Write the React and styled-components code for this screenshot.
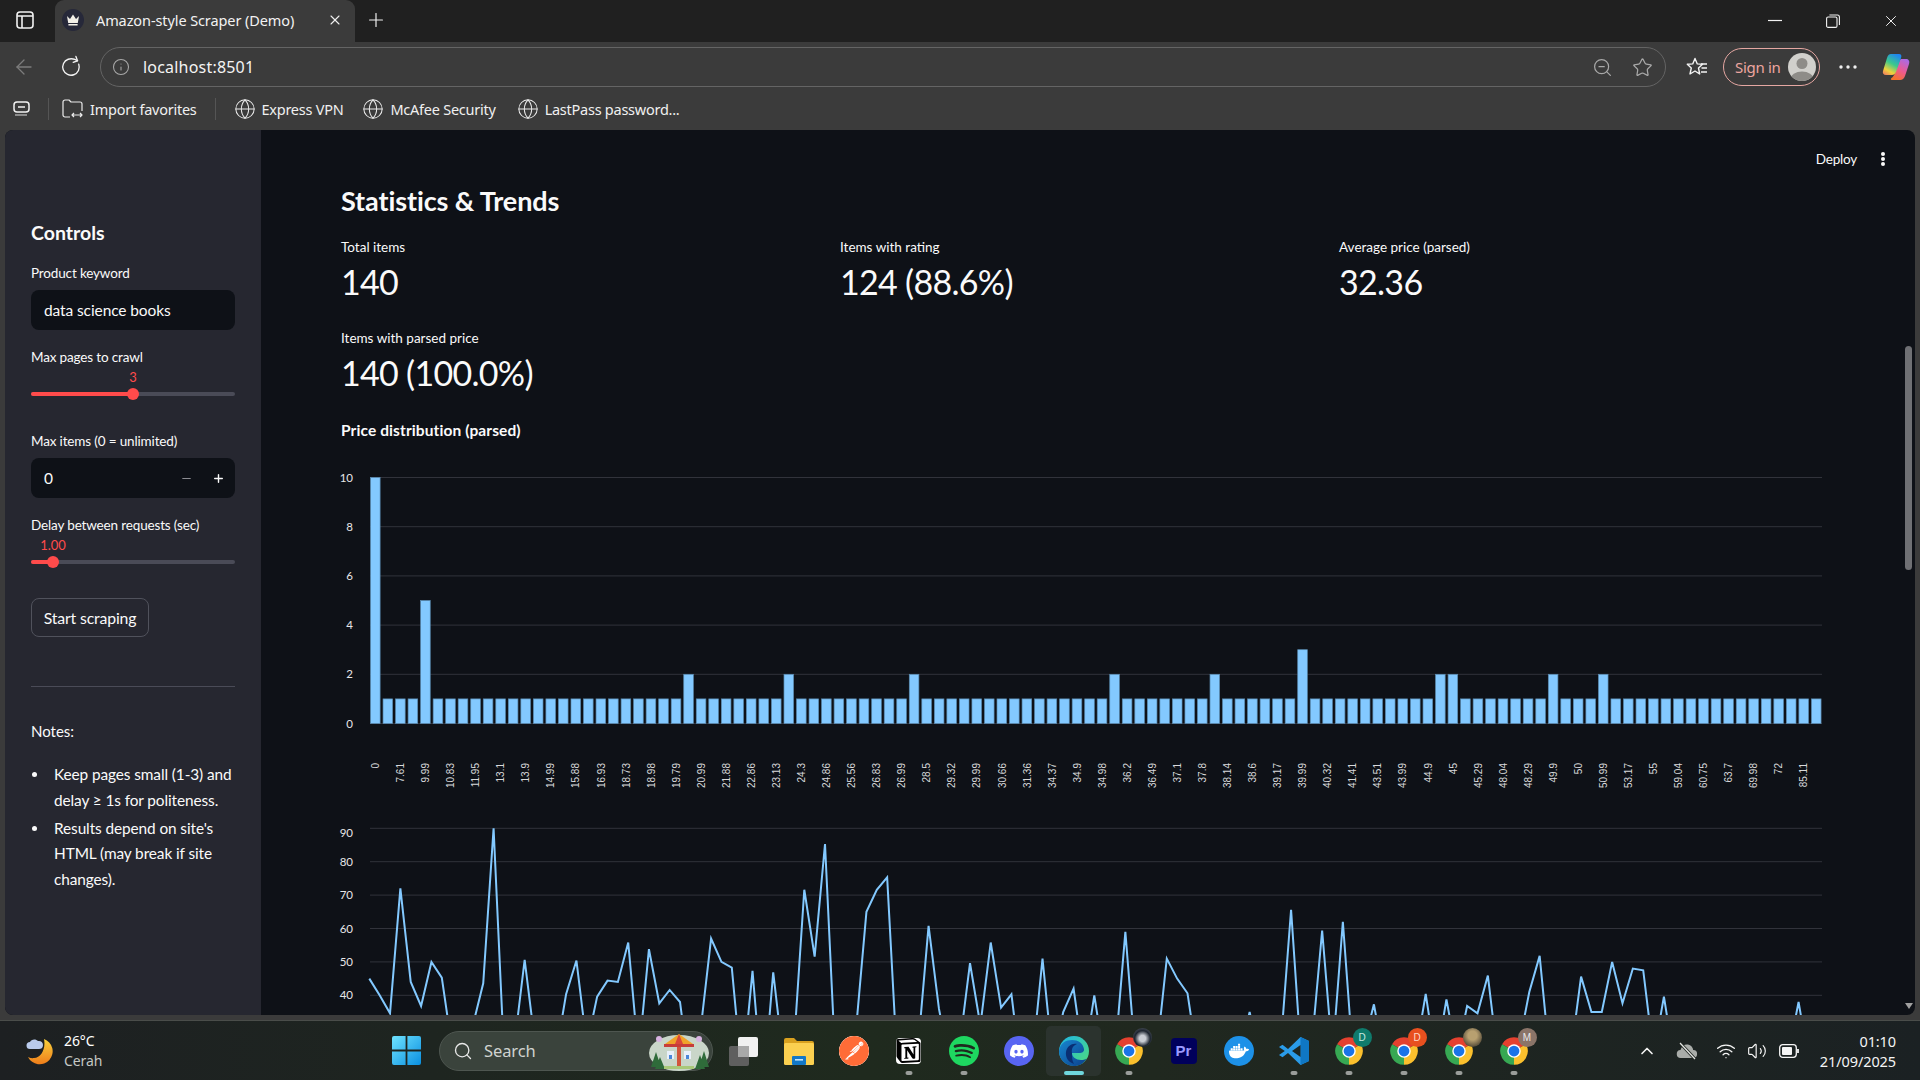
import React from "react"
import styled, { createGlobalStyle } from "styled-components"
import {
  ArrowLeft,
  RotateCw,
  Info,
  ZoomOut,
  Star,
  Globe,
  X,
  Plus,
  Minus,
  Search,
  Wifi,
  Volume2,
  ChevronUp,
} from "lucide-react"
import { SiPostman, SiNotion, SiSpotify, SiDiscord, SiDocker } from "react-icons/si"

const APP_FONT = `Lato, "Noto Sans", sans-serif`
const CHROME_FONT = `"Noto Sans", "Open Sans", sans-serif`

const GlobalStyle = createGlobalStyle`
  html, body { margin: 0; height: 100%; background: #3b3b3b; overflow: hidden; }
  * { box-sizing: border-box; }
`

const Screen = styled.div`
  width: 1920px;
  height: 1080px;
  display: flex;
  flex-direction: column;
  font-family: ${CHROME_FONT};
  color: #fff;
`

/* ---------- browser chrome ---------- */
const TitleBar = styled.div`
  height: 42px;
  background: #202020;
  display: flex;
  align-items: flex-end;
`
const SideToggle = styled.div`
  width: 55px;
  height: 42px;
  padding: 0 5px 2px 0;
  display: flex;
  align-items: center;
  justify-content: center;
`
const Tab = styled.div`
  width: 300px;
  height: 42px;
  background: #3b3b3b;
  border-radius: 9px 9px 0 0;
  display: flex;
  align-items: center;
  padding: 0 12px 2px 7px;
`
const Favicon = styled.div`
  width: 22px;
  height: 22px;
  border-radius: 50%;
  background: #262839;
  display: flex;
  align-items: center;
  justify-content: center;
  margin-right: 12px;
`
const TabTitle = styled.span`
  flex: 1;
  font-size: 14.5px;
  letter-spacing: -0.1px;
  color: #f2f2f2;
`
const NewTab = styled.div`
  width: 42px;
  height: 42px;
  padding-bottom: 3px;
  display: flex;
  align-items: center;
  justify-content: center;
`
const WindowButtons = styled.div`
  margin-left: auto;
  display: flex;
`
const WindowButton = styled.div`
  width: 58px;
  height: 42px;
  display: flex;
  align-items: center;
  justify-content: center;
`
const Toolbar = styled.div`
  height: 50px;
  background: #3b3b3b;
  display: flex;
  align-items: center;
`
const NavButton = styled.div`
  width: ${(p) => p.$w || 45}px;
  display: flex;
  justify-content: center;
  color: ${(p) => p.$color || "#f0f0f0"};
`
const AddressBar = styled.div`
  width: 1566px;
  height: 40px;
  margin-left: 7px;
  border: 1px solid #646464;
  border-radius: 20px;
  display: flex;
  align-items: center;
  padding: 0 12px 0 11px;
  color: #a9a9a9;
`
const Url = styled.span`
  flex: 1;
  margin-left: 13px;
  font-size: 16px;
  letter-spacing: 0.2px;
  color: #f4f4f4;
`
const AddressAction = styled.div`
  margin-left: 19px;
  display: flex;
`
const SignIn = styled.div`
  width: 97px;
  height: 38px;
  margin: 0 3px 0 -5px;
  border: 1.5px solid #e5a7a2;
  border-radius: 19px;
  display: flex;
  align-items: center;
  justify-content: space-between;
  padding: 0 3px 0 11px;
  font-size: 15px;
  letter-spacing: -0.3px;
  color: #eda6a0;
`
const Bookmarks = styled.div`
  height: 38px;
  padding-bottom: 5px;
  background: #3b3b3b;
  display: flex;
  align-items: center;
  font-size: 14.5px;
  letter-spacing: -0.25px;
  color: #f0f0f0;
`
const BookmarkLeading = styled.div`
  width: 48px;
  display: flex;
  justify-content: center;
  padding-right: 4px;
`
const BookmarkDivider = styled.div`
  width: 1px;
  height: 22px;
  background: #555;
`
const Bookmark = styled.div`
  display: flex;
  align-items: center;
  gap: 6px;
  margin-left: ${(p) => p.$ml}px;
  color: #ececec;
`
const BookmarkLabel = styled.span`
  color: #f0f0f0;
`

/* ---------- streamlit window ---------- */
const AppWindow = styled.div`
  position: relative;
  height: 885px;
  margin: 0 5px;
  background: #0e1117;
  border-radius: 8px 8px 8px 8px;
  display: flex;
  overflow: hidden;
  font-family: ${APP_FONT};
  color: #fafafa;
`
const Sidebar = styled.aside`
  width: 256px;
  flex-shrink: 0;
  background: #262730;
  padding: 88px 26px 0;
`
const SidebarTitle = styled.h3`
  margin: 0 0 15px;
  font-size: 19.5px;
  line-height: 30px;
  font-weight: 700;
  letter-spacing: 0;
`
const Field = styled.div`
  padding-bottom: 17px;
`
const FieldLabel = styled.div`
  font-size: 13.5px;
  line-height: 20px;
  letter-spacing: -0.15px;
  margin-bottom: ${(p) => p.$mb || 0}px;
`
const InputBox = styled.div`
  height: 40px;
  background: #0e1117;
  border-radius: 8px;
  display: flex;
  align-items: center;
  padding: 0 13px;
  font-size: 15.5px;
  letter-spacing: -0.1px;
`
const Stepper = styled.div`
  margin-left: auto;
  display: flex;
  align-items: center;
  gap: 19px;
  margin-right: -3px;
`
const SliderTrack = styled.div`
  position: relative;
  height: 4px;
  margin: 25px 0 18px;
  border-radius: 2px;
  background: #4a4b57;
`
const SliderFill = styled.div`
  height: 100%;
  border-radius: 2px;
  background: #ff4b4b;
  width: ${(p) => p.$pos}px;
`
const SliderThumb = styled.div`
  position: absolute;
  top: -4px;
  left: ${(p) => p.$pos - 6}px;
  width: 12px;
  height: 12px;
  border-radius: 50%;
  background: #ff4b4b;
`
const SliderValue = styled.div`
  position: absolute;
  top: -23px;
  left: ${(p) => p.$pos}px;
  transform: translateX(-50%);
  font-size: 13px;
  line-height: 16px;
  color: #ff4b4b;
`
const StartButton = styled.div`
  width: 118px;
  height: 39px;
  margin-top: -1px;
  border: 1px solid #50525c;
  border-radius: 8px;
  display: flex;
  align-items: center;
  justify-content: center;
  font-size: 15.8px;
  letter-spacing: -0.15px;
`
const Rule = styled.hr`
  margin: 49px 0 32px;
  border: 0;
  border-top: 1px solid #4a4b57;
`
const NotesTitle = styled.div`
  font-size: 15px;
  line-height: 25.5px;
`
const NotesList = styled.ul`
  margin: 17.5px 0 0;
  padding: 0 0 0 23px;
  list-style: none;
`
const NotesItem = styled.li`
  position: relative;
  font-size: 15.4px;
  line-height: 25.5px;
  margin-bottom: 2.5px;
  letter-spacing: -0.1px;
  white-space: nowrap;
  &::before {
    content: "";
    position: absolute;
    left: -22.5px;
    top: 10px;
    width: 5px;
    height: 5px;
    border-radius: 50%;
    background: #fafafa;
  }
`
const Main = styled.main`
  flex: 1;
  padding: 51px 0 0 80px;
  overflow: hidden;
`
const Heading = styled.h2`
  margin: 0 0 16px;
  font-size: 27px;
  line-height: 40px;
  font-weight: 700;
  letter-spacing: -0.1px;
`
const Metrics = styled.div`
  width: 1497px;
  display: grid;
  grid-template-columns: repeat(3, 1fr);
  row-gap: 21px;
`
const MetricLabel = styled.div`
  font-size: 13.5px;
  line-height: 20px;
  letter-spacing: 0;
`
const MetricValue = styled.div`
  font-size: 34px;
  line-height: 50px;
  letter-spacing: -0.7px;
`
const SectionLabel = styled.div`
  margin-top: 22px;
  font-size: 15.5px;
  line-height: 20px;
  font-weight: 700;
  letter-spacing: 0.1px;
`
const Chart = styled.svg`
  display: block;
  margin-left: -11px;
  margin-top: ${(p) => p.$mt}px;
  overflow: hidden;
`
const AxisNumber = styled.text`
  font-family: ${APP_FONT};
  font-size: 11.5px;
  fill: #e6e6e8;
  text-anchor: end;
`
const AxisCategory = styled.text`
  font-family: "Liberation Sans", sans-serif;
  font-size: 10px;
  fill: #d8d9db;
  text-anchor: end;
`
const TopActions = styled.div`
  position: absolute;
  top: 21px;
  right: 30px;
  display: flex;
  align-items: center;
  gap: 24px;
  font-size: 13.5px;
  letter-spacing: -0.2px;
`
const Kebab = styled.div`
  display: flex;
  flex-direction: column;
  gap: 1px;
  span {
    width: 4px;
    height: 4px;
    border-radius: 50%;
    background: #fafafa;
  }
`
const ScrollThumb = styled.div`
  position: absolute;
  top: 216px;
  right: 3px;
  width: 7px;
  height: 224px;
  border-radius: 4px;
  background: #6f7074;
`
const ScrollArrow = styled.div`
  position: absolute;
  right: 2px;
  bottom: 6px;
  width: 0;
  height: 0;
  border-left: 4.5px solid transparent;
  border-right: 4.5px solid transparent;
  border-top: 6px solid #a0a0a0;
`
const WindowGap = styled.div`
  height: 5px;
  background: #3b3b3b;
`

/* ---------- windows taskbar ---------- */
const Taskbar = styled.div`
  height: 60px;
  border-top: 1px solid #4a4d4a;
  background: linear-gradient(90deg, #1d2022 0%, #1f2a1e 45%, #20281f 60%, #1b2123 100%);
  display: flex;
  align-items: center;
`
const Weather = styled.div`
  width: 392px;
  display: flex;
  align-items: center;
  padding-left: 25px;
  gap: 9px;
`
const WeatherText = styled.div`
  font-size: 14px;
  line-height: 20px;
  letter-spacing: -0.1px;
  span {
    display: block;
    color: #c4c7c4;
  }
`
const SearchBox = styled.div`
  position: relative;
  width: 274px;
  height: 40px;
  margin-left: 18px;
  border-radius: 20px;
  border: 1px solid #4e5650;
  background: #3a433c;
  display: flex;
  align-items: center;
  padding-left: 13px;
  gap: 11px;
  font-size: 16.5px;
  letter-spacing: -0.1px;
  color: #d0d3d0;
`
const SearchArt = styled.svg`
  position: absolute;
  right: 0;
  top: -1px;
`
const TaskIcons = styled.div`
  display: flex;
  margin-left: 3px;
`
const TaskSlot = styled.div`
  position: relative;
  width: 55px;
  height: 50px;
  display: flex;
  align-items: center;
  justify-content: center;
  border-radius: 5px;
  background: ${(p) => (p.$active ? "#2b332e" : "transparent")};
  &::after {
    content: "";
    display: ${(p) => (p.$open || p.$active ? "block" : "none")};
    position: absolute;
    bottom: 1px;
    left: 50%;
    transform: translateX(-50%);
    width: ${(p) => (p.$active ? 20 : 7)}px;
    height: 4px;
    border-radius: 2px;
    background: ${(p) => (p.$active ? "#6fd6dc" : "#9a9d9a")};
  }
`
const CircleIcon = styled.div`
  width: ${(p) => p.$size || 30}px;
  height: ${(p) => p.$size || 30}px;
  border-radius: 50%;
  background: ${(p) => p.$bg};
  display: flex;
  align-items: center;
  justify-content: center;
  color: #fff;
`
const NotionTile = styled.div`
  width: 25px;
  height: 26px;
  border-radius: 4px;
  background: #fff;
  display: flex;
  align-items: center;
  justify-content: center;
  color: #000;
`
const PremiereTile = styled.div`
  width: 26px;
  height: 26px;
  border-radius: 4px;
  background: #00005b;
  color: #9a9aff;
  font-family: "Liberation Sans", sans-serif;
  font-size: 15px;
  font-weight: 700;
  display: flex;
  align-items: center;
  justify-content: center;
`
const ChromeWrap = styled.div`
  position: relative;
  width: 30px;
  height: 30px;
`
const ChromeBadge = styled.div`
  position: absolute;
  top: -8px;
  right: -8px;
  width: 19px;
  height: 19px;
  border-radius: 50%;
  background: ${(p) => p.$bg};
  display: flex;
  align-items: center;
  justify-content: center;
  font-family: "Liberation Sans", sans-serif;
  font-size: 10px;
  color: ${(p) => p.$fg || "#e8e8e8"};
`
const Tray = styled.div`
  margin-left: auto;
  display: flex;
  align-items: center;
  color: #f5f5f5;
`
const TrayIcon = styled.div`
  width: ${(p) => p.$w}px;
  display: flex;
  justify-content: center;
  color: ${(p) => p.$color || "#f5f5f5"};
`
const Clock = styled.div`
  width: 104px;
  margin-left: 7px;
  padding-right: 24px;
  white-space: nowrap;
  font-size: 14.5px;
  line-height: 20px;
  letter-spacing: -0.1px;
`
const ClockLine = styled.div`
  display: flex;
  justify-content: flex-end;
`

/* ---------- drawn icons ---------- */
const PanelIcon = () => (
  <svg width="18" height="18" viewBox="0 0 18 18" fill="none" stroke="#f2f2f2" strokeWidth="1.6">
    <rect x="1" y="1" width="16" height="16" rx="3" />
    <path d="M1 5h16M6 5v12" />
  </svg>
)
const Crown = () => (
  <svg width="14" height="12" viewBox="0 0 14 12" fill="#f1efe8">
    <path d="M1 2l3 3 3-4.5L10 5l3-3-1.2 7H2.2zM2.4 10h9.2v1.6H2.4z" />
  </svg>
)
const MinimizeIcon = () => (
  <svg width="14" height="4" viewBox="0 0 14 4" stroke="#f2f2f2" strokeWidth="1.2">
    <path d="M0 1.5h14" />
  </svg>
)
const RestoreIcon = () => (
  <svg width="14" height="14" viewBox="0 0 14 14" fill="none" stroke="#f2f2f2" strokeWidth="1.1">
    <rect x="0.6" y="3" width="10.4" height="10.4" rx="1.5" />
    <path d="M3.4 1h8a2 2 0 0 1 2 2v8" />
  </svg>
)
const FavoritesIcon = () => (
  <svg width="22" height="20" viewBox="0 0 22 20" fill="none" stroke="#f4f4f4" strokeWidth="1.4" strokeLinejoin="round">
    <path d="M10 1.5l2.3 5.4 5.2.4-4 3.7 1.2 6-4.7-3-5 3 1.3-6-4-3.7 5.4-.4z" transform="translate(-1 0)" />
    <path d="M15 7h6M15.5 11h5.5M15 15h6" />
  </svg>
)
const Avatar = () => (
  <svg width="28" height="28" viewBox="0 0 28 28">
    <defs>
      <clipPath id="avatar-clip">
        <circle cx="14" cy="14" r="14" />
      </clipPath>
    </defs>
    <circle cx="14" cy="14" r="14" fill="#d1d0cc" />
    <g clipPath="url(#avatar-clip)" fill="#8e8c88">
      <circle cx="14" cy="10.5" r="5.5" />
      <ellipse cx="14" cy="26" rx="11.5" ry="7.5" />
    </g>
  </svg>
)
const Copilot = () => (
  <svg width="28" height="28" viewBox="0 0 28 28">
    <defs>
      <linearGradient id="cp-a" x1="0.7" y1="0" x2="0.2" y2="1">
        <stop offset="0" stopColor="#1f86f0" />
        <stop offset="0.45" stopColor="#3cc98c" />
        <stop offset="0.8" stopColor="#f0d23c" />
        <stop offset="1" stopColor="#f08a5a" />
      </linearGradient>
      <linearGradient id="cp-b" x1="0.8" y1="0" x2="0.3" y2="1">
        <stop offset="0" stopColor="#a86be8" />
        <stop offset="0.55" stopColor="#ee5a8e" />
        <stop offset="1" stopColor="#f5722b" />
      </linearGradient>
    </defs>
    <path d="M19 6H24C26.500 6 28 8 27 11L23 23C22 25.500 20.500 27 18 27H10C8.500 27 8.500 26 9.500 25C11 24 12 22.500 13 20L17 9C17.500 7.500 18 6.500 19 6z" fill="url(#cp-b)" />
    <path d="M9 1H17C19 1 20 2.500 19 5L14 19C13 21 12 22 10 22H4C1.500 22 .3 20 1 18L5 5C5.800 2.500 7 1 9 1z" fill="url(#cp-a)" />
  </svg>
)
const BookmarkBarIcon = () => (
  <svg width="18" height="16" viewBox="0 0 18 16" fill="none" stroke="#f2f2f2" strokeWidth="1.5">
    <rect x="1" y="1" width="15" height="10" rx="3" />
    <path d="M5 6h7" />
    <path d="M2 14h12" stroke="#a8a8a8" />
  </svg>
)
const ImportIcon = () => (
  <svg width="22" height="20" viewBox="0 0 22 20" fill="none" stroke="#ececec" strokeWidth="1.2" strokeLinejoin="round">
    <path d="M8 18H3a2 2 0 0 1-2-2V3a2 2 0 0 1 2-2h4l2 2h9a2 2 0 0 1 2 2v7" />
    <path d="M10 16h10M12 14l-2 2 2 2M18 14l2 2-2 2" />
  </svg>
)
const MoonCloud = () => (
  <svg width="30" height="30" viewBox="0 0 30 30">
    <defs>
      <linearGradient id="moon" x1="0" y1="0" x2="0" y2="1">
        <stop offset="0" stopColor="#f8d23c" />
        <stop offset="1" stopColor="#ef7d1a" />
      </linearGradient>
    </defs>
    <path d="M19 3a13 13 0 1 1-16 18c2 1 4 1.300 6 1.100C16 21.500 21 13 19 3z" fill="url(#moon)" />
    <path d="M5 13a3.500 3.500 0 0 1 0-7c1-3 6-3.500 8-1 2.500-.5 5 1 5 4s-2 4-4 4z" fill="#b9cbec" />
  </svg>
)
const WindowsLogo = () => (
  <svg width="29" height="29" viewBox="0 0 29 29">
    <defs>
      <linearGradient id="win" x1="0" y1="0" x2="1" y2="1">
        <stop offset="0" stopColor="#6fe3ff" />
        <stop offset="1" stopColor="#0a8fe0" />
      </linearGradient>
    </defs>
    <path d="M0 2a2 2 0 0 1 2-2h11.600v13.600H0zM15.400 0H27a2 2 0 0 1 2 2v11.600H15.400zM0 15.400h13.600V29H2a2 2 0 0 1-2-2zM15.400 15.400H29V27a2 2 0 0 1-2 2H15.400z" fill="url(#win)" />
  </svg>
)
const CarouselArt = () => (
  <SearchArt width="66" height="40" viewBox="0 0 66 40">
    <ellipse cx="33" cy="22" rx="30" ry="18" fill="#c9d6c9" />
    <path d="M5 36l5-15 5 15zM9 38l5-12 5 12zM49 38l5-14 5 14zM53 36l5-16 5 16z" fill="#2f6b3a" />
    <path d="M33 3L19 13h28z" fill="#f0a32a" />
    <path d="M33 3l-4 10h8z" fill="#d9473b" />
    <rect x="18" y="13" width="30" height="3" fill="#c73d3a" />
    <rect x="31" y="16" width="4" height="19" fill="#d2553c" />
    <rect x="21" y="20" width="7" height="8" fill="#e9f0fa" />
    <rect x="38" y="20" width="7" height="8" fill="#e9f0fa" />
    <rect x="23" y="24" width="3" height="4" fill="#4a86d8" />
    <rect x="40" y="24" width="3" height="4" fill="#4a86d8" />
    <rect x="18" y="35" width="30" height="3" fill="#a9c97a" />
    <circle cx="13" cy="8" r="3" fill="#d8b4e2" />
    <circle cx="53" cy="8" r="3" fill="#d8b4e2" />
  </SearchArt>
)
const TaskView = () => (
  <svg width="31" height="30" viewBox="0 0 31 30">
    <rect x="10" y="1" width="20" height="20" rx="2" fill="#f1f1f1" />
    <rect x="1" y="10" width="20" height="20" rx="2" fill="#5f5f5f" />
    <rect x="10" y="10" width="11" height="11" fill="#a9a9a9" />
  </svg>
)
const Folder = () => (
  <svg width="30" height="28" viewBox="0 0 30 28">
    <path d="M0 3a2 2 0 0 1 2-2h8l3 3h15a2 2 0 0 1 2 2v3H0z" fill="#d9a11f" />
    <rect y="6" width="30" height="22" rx="1.500" fill="#fbd050" />
    <rect x="8" y="19" width="14" height="9" rx="1" fill="#1277c6" />
    <rect x="11" y="22" width="8" height="1.600" fill="#bfe3ff" />
  </svg>
)
const EdgeIcon = () => (
  <svg width="30" height="30" viewBox="0 0 30 30">
    <defs>
      <linearGradient id="edge-a" x1="0" y1="0" x2="1" y2="1">
        <stop offset="0" stopColor="#1fb6e8" />
        <stop offset="1" stopColor="#4fdc78" />
      </linearGradient>
      <linearGradient id="edge-b" x1="0" y1="0" x2="1" y2="1">
        <stop offset="0" stopColor="#1788d0" />
        <stop offset="1" stopColor="#0c3f8c" />
      </linearGradient>
    </defs>
    <circle cx="15" cy="15" r="15" fill="url(#edge-a)" />
    <path d="M0 15C1 7 7 4 13 4c6 0 11 3 12 9 .4 2.500-1.500 4-5 4h-7c0 4 4 7 9 7 2 0 4-.5 5.500-1.500C25 27.500 20 30 15 30 6 30 0 23 0 15z" fill="url(#edge-b)" />
    <path d="M13 17c-1-5 2-8 5-9-5-1-10 2-11 8-.7 5 2 10 8 12-2-3-2-7-2-11z" fill="#0a2f73" />
  </svg>
)
const VsCode = () => (
  <svg width="30" height="30" viewBox="0 0 30 30">
    <path d="M21.500 1L30 5v20l-8.500 4L9 17l-5.500 4.300L0 19l5.800-4L0 11l3.500-2.300L9 13z" fill="#2a9be8" />
    <path d="M21.500 1L30 5v20l-8.500 4z" fill="#0f77c4" />
    <path d="M21.500 9v12L13 15z" fill="#1d2622" />
  </svg>
)
const Chrome = ({ badge, bg, fg }) => (
  <ChromeWrap>
    <svg width="30" height="30" viewBox="0 0 24 24">
      <path d="M12 12L2.470 6.500A11 11 0 0 1 21.530 6.500z" fill="#e5412f" />
      <path d="M12 12L21.530 6.500A11 11 0 0 1 12 23z" fill="#fbc02d" />
      <path d="M12 12L12 23A11 11 0 0 1 2.470 6.500z" fill="#37a853" />
      <circle cx="12" cy="12" r="5.400" fill="#fff" />
      <circle cx="12" cy="12" r="4.300" fill="#1a73e8" />
    </svg>
    {bg && (
      <ChromeBadge $bg={bg} $fg={fg}>
        {badge}
      </ChromeBadge>
    )}
  </ChromeWrap>
)
const TrayCloud = () => (
  <svg width="22" height="20" viewBox="0 0 22 20">
    <path d="M5 17a4 4 0 0 1-.5-8C5.500 5 8.500 3 12 3.500c3 .5 5 3 5.200 5.500a4 4 0 0 1-.2 8z" fill="#a9aca9" />
    <path d="M4 2l15 16" stroke="#1e241f" strokeWidth="3" />
    <path d="M4 2l15 16" stroke="#e4e6e4" strokeWidth="1.200" />
  </svg>
)
const TrayBattery = () => (
  <svg width="20" height="14" viewBox="0 0 20 14" fill="none" stroke="#f5f5f5" strokeWidth="1.300">
    <rect x="0.700" y="0.700" width="16.600" height="12.600" rx="3" />
    <rect x="3" y="3" width="10" height="8" rx="1" fill="#f5f5f5" stroke="none" />
    <path d="M19 5v4" strokeWidth="1.800" />
  </svg>
)

/* ---------- data ---------- */
const PRICE_TICKS = [
  "0", "7.61", "9.99", "10.83", "11.95", "13.1", "13.9", "14.99", "15.88", "16.93",
  "18.73", "18.98", "19.79", "20.99", "21.88", "22.86", "23.13", "24.3", "24.86", "25.56",
  "26.83", "26.99", "28.5", "29.32", "29.99", "30.66", "31.36", "34.37", "34.9", "34.98",
  "36.2", "36.49", "37.1", "37.8", "38.14", "38.6", "39.17", "39.99", "40.32", "41.41",
  "43.51", "43.99", "44.9", "45", "45.29", "48.04", "48.29", "49.9", "50", "50.99",
  "53.17", "55", "59.04", "60.75", "63.7", "69.98", "72", "85.11",
]
const BAR_PEAKS = { 0: 10, 4: 5, 25: 2, 33: 2, 43: 2, 59: 2, 67: 2, 74: 3, 85: 2, 86: 2, 94: 2, 98: 2 }
const BAR_COUNT = 116

const PRICE_SERIES = [
  45, 40, 34.6, 72, 44, 36.8, 50, 45.3, 24, 20, 31, 43.6, 90, 22.6, 25, 50.6, 25.6, 20, 22, 40.3,
  50.4, 25, 39.6, 44.4, 44, 55.8, 21.6, 53.8, 37.6, 41.6, 38, 14, 30, 57, 50, 48.3, 15, 47.3, 10, 46.9,
  20, 25, 71.6, 51.6, 85.3, 20, 15, 30, 65, 71.6, 75.3, 18, 20, 25, 60.8, 36, 20, 25, 49.6, 31,
  55.8, 36.3, 40.3, 15, 20, 51, 20, 35, 42, 20, 40, 20, 22, 59, 20, 18, 22, 51, 45, 40.6,
  20, 22, 18, 20, 22, 35, 20, 22, 25, 65.6, 20, 25, 59.4, 22, 62, 20, 25, 37.3, 20, 18,
  20, 22, 40.4, 20, 38.8, 22, 36.8, 34.6, 45.9, 20, 18, 25, 41, 51.8, 20, 25, 22, 45.6, 35, 35,
  50, 37.6, 48, 47.5, 22, 39.6, 20, 18, 22, 20, 18, 20, 22, 20, 18, 20, 25, 22, 38, 20,
]

const BAR_BASE = 263.5
const UNIT = 24.6
const barValue = (i) => BAR_PEAKS[i] || 1

const PriceBars = () => (
  <Chart width="1500" height="340" $mt={20}>
    {[0, 2, 4, 6, 8, 10].map((v) => (
      <g key={v}>
        <line x1="40" x2="1492" y1={BAR_BASE - v * UNIT} y2={BAR_BASE - v * UNIT} stroke="#31333b" />
        <AxisNumber x="23" y={BAR_BASE - v * UNIT + 4}>
          {v}
        </AxisNumber>
      </g>
    ))}
    {Array.from({ length: BAR_COUNT }, (_, i) => {
      const h = barValue(i) * UNIT
      return (
        <rect key={i} x={40.5 + i * 12.53} y={BAR_BASE - h} width="9.6" height={h} fill="#83c9ff" stroke="#5a8bb0" strokeWidth="0.7" />
      )
    })}
    {PRICE_TICKS.map((t, i) => (
      <AxisCategory key={t} transform={`translate(${49 + i * 25.06} 303) rotate(-90)`}>
        {t}
      </AxisCategory>
    ))}
  </Chart>
)

const lineY = (v) => 185.3 - (v - 40) * 3.34

const PriceLine = () => (
  <Chart width="1500" height="400" $mt={10}>
    {[40, 50, 60, 70, 80, 90].map((v) => (
      <g key={v}>
        <line x1="40" x2="1492" y1={lineY(v)} y2={lineY(v)} stroke="#31333b" />
        <AxisNumber x="23" y={lineY(v) + (v === 90 ? 9 : 4)}>
          {v}
        </AxisNumber>
      </g>
    ))}
    <polyline
      fill="none"
      stroke="#83c9ff"
      strokeWidth="2"
      points={PRICE_SERIES.map((v, i) => `${39.3 + i * 10.357},${lineY(v)}`).join(" ")}
    />
  </Chart>
)

const Slider = ({ pos, value }) => (
  <SliderTrack>
    <SliderFill $pos={pos} />
    <SliderThumb $pos={pos} />
    <SliderValue $pos={pos}>{value}</SliderValue>
  </SliderTrack>
)

export default function App() {
  return (
    <Screen>
      <GlobalStyle />
      <TitleBar>
        <SideToggle>
          <PanelIcon />
        </SideToggle>
        <Tab>
          <Favicon>
            <Crown />
          </Favicon>
          <TabTitle>Amazon-style Scraper (Demo)</TabTitle>
          <X size={16} color="#f0f0f0" strokeWidth={1.6} />
        </Tab>
        <NewTab>
          <Plus size={22} color="#f0f0f0" strokeWidth={1.3} />
        </NewTab>
        <WindowButtons>
          <WindowButton>
            <MinimizeIcon />
          </WindowButton>
          <WindowButton>
            <RestoreIcon />
          </WindowButton>
          <WindowButton>
            <X size={18} color="#f2f2f2" strokeWidth={1.3} />
          </WindowButton>
        </WindowButtons>
      </TitleBar>

      <Toolbar>
        <NavButton $w={48} $color="#7c7c7c">
          <ArrowLeft size={24} strokeWidth={1.3} />
        </NavButton>
        <NavButton $w={45}>
          <RotateCw size={22} strokeWidth={1.5} style={{ transform: "rotate(-20deg)" }} />
        </NavButton>
        <AddressBar>
          <Info size={18} strokeWidth={1.4} />
          <Url>localhost:8501</Url>
          <ZoomOut size={21} strokeWidth={1.4} />
          <AddressAction>
            <Star size={21} strokeWidth={1.4} />
          </AddressAction>
        </AddressBar>
        <NavButton $w={62}>
          <FavoritesIcon />
        </NavButton>
        <SignIn>
          Sign in
          <Avatar />
        </SignIn>
        <NavButton $w={50}>
          <svg width="18" height="4" viewBox="0 0 18 4" fill="#f0f0f0">
            <circle cx="2" cy="2" r="1.700" />
            <circle cx="9" cy="2" r="1.700" />
            <circle cx="16" cy="2" r="1.700" />
          </svg>
        </NavButton>
        <NavButton $w={46}>
          <Copilot />
        </NavButton>
      </Toolbar>

      <Bookmarks>
        <BookmarkLeading>
          <BookmarkBarIcon />
        </BookmarkLeading>
        <BookmarkDivider />
        <Bookmark $ml={13}>
          <ImportIcon />
          <BookmarkLabel>Import favorites</BookmarkLabel>
        </Bookmark>
        <Bookmark $ml={18}>
          <BookmarkDivider />
        </Bookmark>
        <Bookmark $ml={18}>
          <Globe size={22} strokeWidth={1.1} />
          <BookmarkLabel>Express VPN</BookmarkLabel>
        </Bookmark>
        <Bookmark $ml={19}>
          <Globe size={22} strokeWidth={1.1} />
          <BookmarkLabel>McAfee Security</BookmarkLabel>
        </Bookmark>
        <Bookmark $ml={21}>
          <Globe size={22} strokeWidth={1.1} />
          <BookmarkLabel>LastPass password...</BookmarkLabel>
        </Bookmark>
      </Bookmarks>

      <AppWindow>
        <Sidebar>
          <SidebarTitle>Controls</SidebarTitle>
          <Field>
            <FieldLabel $mb={7}>Product keyword</FieldLabel>
            <InputBox>data science books</InputBox>
          </Field>
          <Field>
            <FieldLabel>Max pages to crawl</FieldLabel>
            <Slider pos={102} value="3" />
          </Field>
          <Field>
            <FieldLabel $mb={7}>Max items (0 = unlimited)</FieldLabel>
            <InputBox>
              0
              <Stepper>
                <Minus size={13} color="#8b8c92" strokeWidth={2} />
                <Plus size={13} color="#fafafa" strokeWidth={2.6} />
              </Stepper>
            </InputBox>
          </Field>
          <Field>
            <FieldLabel>Delay between requests (sec)</FieldLabel>
            <Slider pos={22} value="1.00" />
          </Field>
          <StartButton>Start scraping</StartButton>
          <Rule />
          <NotesTitle>Notes:</NotesTitle>
          <NotesList>
            <NotesItem>
              Keep pages small (1-3) and
              <br />
              delay ≥ 1s for politeness.
            </NotesItem>
            <NotesItem>
              Results depend on site's
              <br />
              HTML (may break if site
              <br />
              changes).
            </NotesItem>
          </NotesList>
        </Sidebar>

        <Main>
          <Heading>Statistics &amp; Trends</Heading>
          <Metrics>
            <div>
              <MetricLabel>Total items</MetricLabel>
              <MetricValue>140</MetricValue>
            </div>
            <div>
              <MetricLabel>Items with rating</MetricLabel>
              <MetricValue>124 (88.6%)</MetricValue>
            </div>
            <div>
              <MetricLabel>Average price (parsed)</MetricLabel>
              <MetricValue>32.36</MetricValue>
            </div>
            <div>
              <MetricLabel>Items with parsed price</MetricLabel>
              <MetricValue>140 (100.0%)</MetricValue>
            </div>
          </Metrics>
          <SectionLabel>Price distribution (parsed)</SectionLabel>
          <PriceBars />
          <PriceLine />
        </Main>

        <TopActions>
          Deploy
          <Kebab>
            <span />
            <span />
            <span />
          </Kebab>
        </TopActions>
        <ScrollThumb />
        <ScrollArrow />
      </AppWindow>
      <WindowGap />

      <Taskbar>
        <Weather>
          <MoonCloud />
          <WeatherText>
            26°C
            <span>Cerah</span>
          </WeatherText>
        </Weather>
        <WindowsLogo />
        <SearchBox>
          <Search size={20} color="#e8e8e8" strokeWidth={1.6} />
          Search
          <CarouselArt />
        </SearchBox>
        <TaskIcons>
          <TaskSlot>
            <TaskView />
          </TaskSlot>
          <TaskSlot>
            <Folder />
          </TaskSlot>
          <TaskSlot>
            <CircleIcon $bg="#ff6c37">
              <SiPostman size={30} color="#ff6c37" style={{ background: "#fff", borderRadius: "50%" }} />
            </CircleIcon>
          </TaskSlot>
          <TaskSlot $open>
            <NotionTile>
              <SiNotion size={25} />
            </NotionTile>
          </TaskSlot>
          <TaskSlot $open>
            <SiSpotify size={30} color="#1ed760" />
          </TaskSlot>
          <TaskSlot>
            <CircleIcon $bg="#5865f2">
              <SiDiscord size={18} />
            </CircleIcon>
          </TaskSlot>
          <TaskSlot $active>
            <EdgeIcon />
          </TaskSlot>
          <TaskSlot $open>
            <Chrome bg="radial-gradient(circle at 50% 55%, #c9cdd4 0 22%, #1d2530 55%, #6b6f78 100%)" badge="" />
          </TaskSlot>
          <TaskSlot>
            <PremiereTile>Pr</PremiereTile>
          </TaskSlot>
          <TaskSlot>
            <CircleIcon $bg="#1d91e8">
              <SiDocker size={20} />
            </CircleIcon>
          </TaskSlot>
          <TaskSlot $open>
            <VsCode />
          </TaskSlot>
          <TaskSlot $open>
            <Chrome bg="#0f7b6c" fg="#c5e8e0" badge="D" />
          </TaskSlot>
          <TaskSlot $open>
            <Chrome bg="#e8501f" fg="#ffd9c8" badge="D" />
          </TaskSlot>
          <TaskSlot $open>
            <Chrome bg="radial-gradient(circle at 50% 40%, #b8a070 0 30%, #4d4434 80%)" badge="" />
          </TaskSlot>
          <TaskSlot $open>
            <Chrome bg="#8a7468" badge="M" />
          </TaskSlot>
        </TaskIcons>
        <Tray>
          <TrayIcon $w={40}>
            <ChevronUp size={20} strokeWidth={2} />
          </TrayIcon>
          <TrayIcon $w={40}>
            <TrayCloud />
          </TrayIcon>
          <TrayIcon $w={38}>
            <Wifi size={20} strokeWidth={1.6} />
          </TrayIcon>
          <TrayIcon $w={24}>
            <Volume2 size={20} strokeWidth={1.4} />
          </TrayIcon>
          <TrayIcon $w={40}>
            <TrayBattery />
          </TrayIcon>
          <Clock>
            <ClockLine>01:10</ClockLine>
            <ClockLine>21/09/2025</ClockLine>
          </Clock>
        </Tray>
      </Taskbar>
    </Screen>
  )
}
